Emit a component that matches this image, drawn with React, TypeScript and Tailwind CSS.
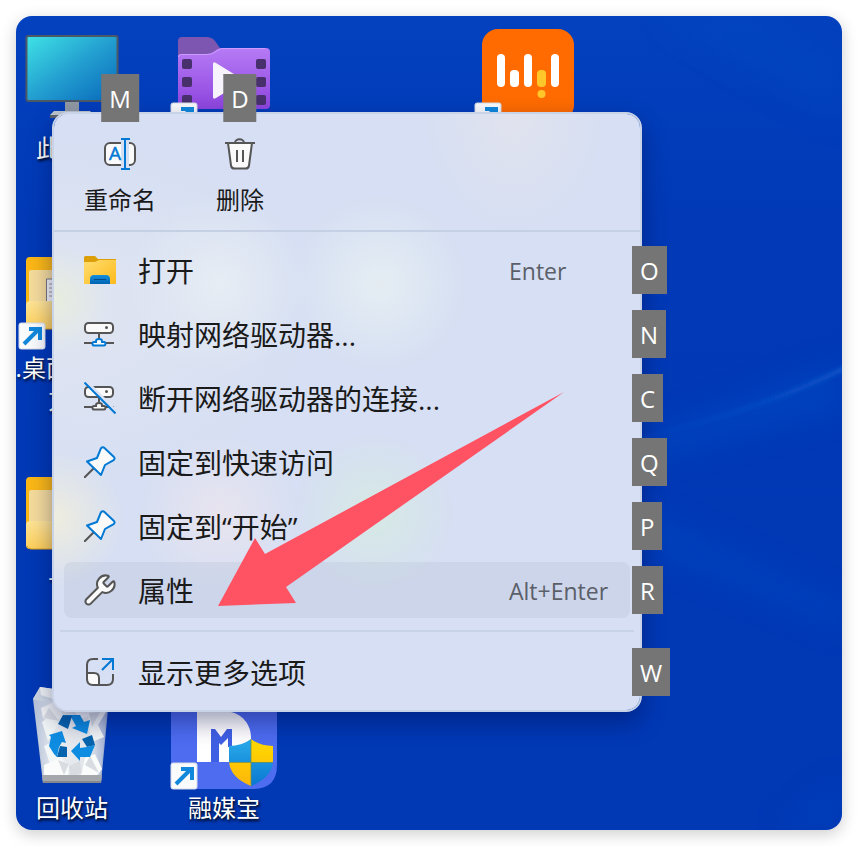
import type { ReactNode } from "react";
import { Wrench } from "lucide-react";

const INK = "#555555";
const BLUE = "#0078d4";

function Svg({ children }: { children: ReactNode }) {
  return (
    <svg viewBox="0 0 32 32" fill="none" className="size-8 shrink-0" aria-hidden="true">
      {children}
    </svg>
  );
}

function RenameIcon() {
  return (
    <Svg>
      <path d="M17 5H6a5 5 0 0 0-5 5v12a5 5 0 0 0 5 5h11z" fill="#fafafa" />
      <path d="M25 5h1a5 5 0 0 1 5 5v12a5 5 0 0 1-5 5h-1z" fill="#fafafa" />
      <path
        d="M17 5H6a5 5 0 0 0-5 5v12a5 5 0 0 0 5 5h11M25 5h1a5 5 0 0 1 5 5v12a5 5 0 0 1-5 5h-1"
        stroke={INK}
        strokeWidth="2"
      />
      <text x="5" y="22" fontSize="19" fill={BLUE} stroke={BLUE} strokeWidth=".5" className="font-['Open_Sans',sans-serif]">
        A
      </text>
      <path d="M21 1v30M17 1h9M17 31h9" stroke={BLUE} strokeWidth="2" />
    </Svg>
  );
}

function TrashIcon() {
  return (
    <Svg>
      <path d="m4 5 3 22.500q.4 3 3.500 3h11q3.100 0 3.500-3L28 5z" fill="#fafafa" stroke={INK} strokeWidth="2" />
      <path d="M1 5h30M11 5c0-5 9-5 9 0M13 12v12M19 12v12" stroke={INK} strokeWidth="2" />
    </Svg>
  );
}

function FolderIcon() {
  return (
    <Svg>
      <defs>
        <linearGradient id="open-folder" x1="0" y1="0" x2="1" y2="1">
          <stop stopColor="#ffdd6f" />
          <stop offset="1" stopColor="#fdba1c" />
        </linearGradient>
        <linearGradient id="open-tray" x1="0" y1="0" x2="0" y2="1">
          <stop stopColor="#1490df" />
          <stop offset="1" stopColor="#0063b1" />
        </linearGradient>
      </defs>
      <path d="M0 3.500Q0 2 1.500 2H11l3 3h18v5H0z" fill="#dd9f08" />
      <path d="M0 8h11l4-2h17v24H0z" fill="url(#open-folder)" />
      <path d="M6 30v-5q0-4 4-4h12q4 0 4 4v5z" fill="url(#open-tray)" />
      <path d="M10 25.500h12" stroke="#004b8d" />
    </Svg>
  );
}

function DriveShape({ accent }: { accent: string }) {
  return (
    <>
      <rect x="1" y="5" width="28" height="10" rx="3.500" fill="#fafafa" stroke={INK} strokeWidth="2" />
      <circle cx="22.500" cy="9.500" r="1.500" fill={INK} />
      <path d="M15 15v6M0 25h8M22 25h8" stroke={INK} strokeWidth="2" />
      <path
        d="M12 24v-1q0-2 3-2t3 2v1h2q1.500 0 1.500 1.700T20 27.500H10q-1.500 0-1.500-1.800T10 24z"
        fill="#fafafa"
        stroke={accent}
        strokeWidth="2"
      />
    </>
  );
}

function MapDriveIcon() {
  return (
    <Svg>
      <DriveShape accent={BLUE} />
    </Svg>
  );
}

function DisconnectIcon() {
  return (
    <Svg>
      <DriveShape accent={INK} />
      <path d="m3 0 29 29" stroke="#dbe2f3" strokeWidth="3" />
      <path d="m.500.500 31 31" stroke={BLUE} strokeWidth="2" />
    </Svg>
  );
}

function PinIcon() {
  return (
    <Svg>
      <path d="m0 32 10-10" stroke={INK} strokeWidth="2" />
      <path
        d="M17 2.200q1.800-1.800 3.700 0l9 8.500q2 2-.5 3.700L21 19l-4 10L3 15.500 13 12z"
        fill="#fafafa"
        stroke={BLUE}
        strokeWidth="2"
        strokeLinejoin="round"
      />
    </Svg>
  );
}

function WrenchIcon() {
  return (
    <Wrench viewBox="1 1 22 22" className="size-8 shrink-0" color={INK} strokeWidth={1.400} fill="#fafafa" aria-hidden="true" />
  );
}

function MoreIcon() {
  return (
    <Svg>
      <path d="M3 17h7q5 0 5 5v7H8q-5 0-5-5z" fill="#fafafa" />
      <path
        d="M14 3H9Q3 3 3 9v14q0 6 6 6h14q6 0 6-6v-5M3 17h7q5 0 5 5v7"
        stroke={INK}
        strokeWidth="2"
      />
      <path d="M18 3h11v11M29 3 18 14" stroke={BLUE} strokeWidth="2" />
    </Svg>
  );
}

/* ---------- desktop icons, drawn in a 96px box ---------- */

function ShortcutBadge() {
  return (
    <g>
      <rect x="-5" y="75" width="26" height="26" rx="2" fill="#fafbfc" stroke="#d5dce5" />
      <path d="M0 96 15 81M5 81h11v11" stroke="#1188dc" strokeWidth="4" fill="none" />
    </g>
  );
}

function Art({ children }: { children: ReactNode }) {
  return (
    <svg viewBox="0 0 96 96" className="size-24 shrink-0 overflow-visible" aria-hidden="true">
      {children}
    </svg>
  );
}

function ComputerArt() {
  return (
    <Art>
      <defs>
        <linearGradient id="screen" x1="0" y1="0" x2="1" y2="1">
          <stop stopColor="#3fe3e6" />
          <stop offset=".5" stopColor="#239fd0" />
          <stop offset="1" stopColor="#0868bb" />
        </linearGradient>
      </defs>
      <path d="M41 73h14v12H41z" fill="#8f98a3" />
      <path d="m30 83h36l4 4v2H26v-2z" fill="#c0c7ce" />
      <path d="M26 87h44v3H26z" fill="#5c646d" />
      <rect x="2.500" y="8" width="91" height="65" rx="2" fill="url(#screen)" stroke="#4b5967" strokeWidth="2" />
    </Art>
  );
}

function VideoFolderArt() {
  return (
    <Art>
      <defs>
        <linearGradient id="video" x1="0" y1="0" x2="0" y2="1">
          <stop stopColor="#b67bf5" />
          <stop offset="1" stopColor="#8d44dd" />
        </linearGradient>
      </defs>
      <path d="M2 13q0-4 4-4h24q6 0 9 4l5 7H90v20H2z" fill="#7c56b0" />
      <path d="M2 29q0-3 3-3h25q5 0 8-2.500l3-2q2-1.500 5-1.500h44q4 0 4 4v53q0 4-4 4H6q-4 0-4-4z" fill="url(#video)" />
      <path d="M2.500 29q0-2.500 3-2.500H31q5 0 8-2.500l3-2q2-1.500 5-1.500h42" stroke="#cb9bff" fill="none" />
      {[31, 49, 67].map((y) => (
        <g key={y} fill="#47306c">
          <rect x="6" y={y} width="10" height="10" rx="2" />
          <rect x="80" y={y} width="10" height="10" rx="2" />
        </g>
      ))}
      <path d="M37 36q0-3 3-1l26 16q2 1.500 0 3L40 70q-3 2-3-1z" fill="#f7f3fd" />
      <ShortcutBadge />
    </Art>
  );
}

function BarsArt() {
  return (
    <Art>
      <rect x="2" y="1" width="92" height="92" rx="16" fill="#ff6b00" />
      <g fill="#ffffff">
        <rect x="17" y="26" width="8" height="33" rx="4" />
        <rect x="30" y="42" width="9" height="17" rx="4" />
        <rect x="44" y="26" width="8" height="33" rx="4" />
        <rect x="71" y="26" width="8" height="33" rx="4" />
      </g>
      <rect x="57" y="42" width="9" height="17" rx="4" fill="#ffc72a" />
      <circle cx="61.500" cy="66" r="4" fill="#ffc72a" />
      <ShortcutBadge />
    </Art>
  );
}

function YellowFolderArt({ shortcut = false }: { shortcut?: boolean }) {
  return (
    <Art>
      <defs>
        <linearGradient id="flap" x1="0" y1="0" x2="0" y2="1">
          <stop stopColor="#ffe596" />
          <stop offset="1" stopColor="#ffd05a" />
        </linearGradient>
      </defs>
      <path d="M2 13q0-4 4-4h30l10 8h44q4 0 4 4v50H2z" fill="#fcb814" />
      <path d="M5 24q0-2 2-2h80v34H5z" fill="#f6dc9b" />
      {shortcut && (
        <>
          <path d="M22.500 31h20v28h-20z" fill="#f5f5f5" stroke="#777777" />
          <path d="M25 36h5M25 40h5M25 44h5M25 48h5" stroke="#9a9a9a" />
        </>
      )}
      <path d="M2 57q0-4 4-4h84q4 0 4 4v20q0 4-4 4H6q-4 0-4-4z" fill="url(#flap)" />
      <path d="M3 78q1 3 4 3h82q3 0 4-3" stroke="#dfa01c" fill="none" />
      {shortcut && <ShortcutBadge />}
    </Art>
  );
}

function RecycleArt() {
  return (
    <Art>
      <defs>
        <linearGradient id="bin" x1="0" y1="0" x2="1" y2="0">
          <stop stopColor="#a9b8d3" />
          <stop offset=".3" stopColor="#e6eaee" />
          <stop offset=".75" stopColor="#dde2e8" />
          <stop offset="1" stopColor="#8499c9" />
        </linearGradient>
      </defs>
      <path d="M9 11 16-1l14 2 22 2 24 3 9 5-8 84H19z" fill="url(#bin)" />
      <path d="m9 11 7-12 11 5 5 8-8 2z" fill="#cdd7e2" />
      <path d="m16-1 14 2-1 10-12-4zM17 20l18-8 4 17-14 5-6-4z" fill="#f1f4f4" />
      <path d="m18 34 12-9 4 12-10 16zM66 18l16 6-8 13 6 12-12 5-4-20zM20 58l12-6 8 22-13 5z" fill="#f2f5f5" />
      <path d="m20 77 14-6 11 5-1 14-24-3zM57 87l4-17 10-4 7 15-6 8zM48 18l15-4 4 14-12 3z" fill="#fafbfb" />
      <path d="m34 72 11 4-5 11zM66 68l9 17-14-8zM76 24l-8 15-3-14zM25 20l10 13-16-3zM45 78l11-5 2 12-12 4z" fill="#d3d8dd" />
      <path d="m9 11 75 2-8 80H20z" fill="#ffffff" opacity=".14" />
      <path d="M18 87h60l-1 8H19z" fill="#a4a8ac" />
      <path d="M19 93h58v2H19z" fill="#85898e" />
      <path d="m39 27 17 0 4 7 6-2-3 14-15-6 4-2-5-9z" fill="#0e8ce2" />
      <path d="m39 27 9 1-4 13-10-5z" fill="#0563ae" />
      <path d="m25 47 13-4 4 12-4-1-3 5-2 10-3-3-5-8 2-9z" fill="#0e8ce2" />
      <path d="m36 58 7 1v10H33z" fill="#0563ae" />
      <path d="m63 59 8-2-5 12H56v4L47 63l9-9v6z" fill="#0e8ce2" />
      <path d="m58 51 10-4 3 10-8 2z" fill="#0563ae" />
    </Art>
  );
}

function MediaArt() {
  return (
    <Art>
      <defs>
        <clipPath id="shield">
          <path d="M75 51q9 7 22 7v14q0 17-22 26-22-9-22-26V58q13 0 22-7z" />
        </clipPath>
        <linearGradient id="shield-blue" x1="0" y1="0" x2="0" y2="1">
          <stop stopColor="#2badec" />
          <stop offset="1" stopColor="#0876d0" />
        </linearGradient>
        <linearGradient id="shield-gold" x1="0" y1="0" x2="0" y2="1">
          <stop stopColor="#ffdc00" />
          <stop offset="1" stopColor="#fdb40a" />
        </linearGradient>
      </defs>
      <path d="M-5-5h106v82q0 24-24 24H-5z" fill="#4d6cf0" />
      <path d="M21 23h29c17 2 25 14 25 27v24H21z" fill="#ffffff" />
      <path d="M35 41h4l6 8 6-8h5v18h-4v-9l-7 7-2-2v19h-8z" fill="#4060e4" />
      <g clipPath="url(#shield)">
        <path d="M50 50h25v24H50zM75 74h25v25H75z" fill="url(#shield-blue)" />
        <path d="M75 50h25v24H75zM50 74h25v25H50z" fill="url(#shield-gold)" />
        <path d="M75 50v50M50 74.500h50" stroke="#6d8f55" strokeWidth=".8" />
      </g>
      <ShortcutBadge />
    </Art>
  );
}

type DesktopItem = { id: string; cell: string; art: ReactNode; label?: string };

const desktopItems: DesktopItem[] = [
  { id: "computer", cell: "col-start-1 row-start-1", art: <ComputerArt />, label: "此电脑" },
  { id: "videos", cell: "col-start-2 row-start-1", art: <VideoFolderArt /> },
  { id: "bars", cell: "col-start-4 row-start-1", art: <BarsArt /> },
  { id: "files", cell: "col-start-1 row-start-2", art: <YellowFolderArt shortcut />, label: ".桌面_文件 方式" },
  { id: "folder", cell: "col-start-1 row-start-3", art: <YellowFolderArt />, label: "下载" },
  { id: "recycle", cell: "col-start-1 row-start-4", art: <RecycleArt />, label: "回收站" },
  { id: "media", cell: "col-start-2 row-start-4", art: <MediaArt />, label: "融媒宝" },
];

function Wallpaper() {
  return (
    <svg
      viewBox="0 0 826 814"
      preserveAspectRatio="none"
      className="absolute inset-0 size-full"
      aria-hidden="true"
    >
      <defs>
        <linearGradient id="wall" x1="0" y1="0" x2="0" y2="1">
          <stop stopColor="#0341be" />
          <stop offset=".25" stopColor="#0139b6" />
          <stop offset="1" stopColor="#0138b4" />
        </linearGradient>
        <linearGradient id="ray" x1="0" y1="0" x2="1" y2="0">
          <stop stopColor="#0a53c8" stopOpacity="0" />
          <stop offset="1" stopColor="#0f57cb" />
        </linearGradient>
        <filter id="soft" x="-20%" y="-50%" width="140%" height="200%">
          <feGaussianBlur stdDeviation="14" />
        </filter>
        <filter id="fine" x="-20%" y="-50%" width="140%" height="200%">
          <feGaussianBlur stdDeviation="2" />
        </filter>
      </defs>
      <rect width="826" height="814" fill="url(#wall)" />
      <path d="M610 425 826 345v50L610 450z" fill="#0446c1" opacity=".6" filter="url(#soft)" />
      <path d="M620 420Q740 395 830 349v5Q740 398 620 424z" fill="url(#ray)" filter="url(#fine)" />
      <path d="M620 490 830 590v25L620 530z" fill="#0446c1" opacity=".5" filter="url(#soft)" />
      <path d="M640 0 826 110V40L740 0z" fill="#0548c2" opacity=".4" filter="url(#soft)" />
      <path d="M826 760v54h-70z" fill="#0647c2" opacity=".4" filter="url(#soft)" />
    </svg>
  );
}

function KeyTip({ letter, side }: { letter: string; side: "top" | "right" }) {
  return (
    <kbd
      className={`absolute z-10 flex h-12 items-center bg-[#757575] px-2 pt-0.5 font-['Open_Sans','Noto_Sans',sans-serif] text-2xl text-white ${
        side === "top" ? "bottom-full left-1/2 -translate-x-1/2" : "top-1 left-full ml-0.5"
      }`}
    >
      {letter}
    </kbd>
  );
}

type MenuEntry = { label: string; tip: string; icon: ReactNode; shortcut?: string; active?: boolean };

const actions: MenuEntry[] = [
  { label: "重命名", tip: "M", icon: <RenameIcon /> },
  { label: "删除", tip: "D", icon: <TrashIcon /> },
];

const entries: MenuEntry[] = [
  { label: "打开", tip: "O", icon: <FolderIcon />, shortcut: "Enter" },
  { label: "映射网络驱动器...", tip: "N", icon: <MapDriveIcon /> },
  { label: "断开网络驱动器的连接...", tip: "C", icon: <DisconnectIcon /> },
  { label: "固定到快速访问", tip: "Q", icon: <PinIcon /> },
  { label: "固定到“开始”", tip: "P", icon: <PinIcon /> },
  { label: "属性", tip: "R", icon: <WrenchIcon />, shortcut: "Alt+Enter", active: true },
];

function MenuItem({ label, tip, icon, shortcut, active }: MenuEntry) {
  return (
    <button
      type="button"
      role="menuitem"
      className={`relative flex h-14 w-full items-center rounded-lg px-5 text-left ${active ? "bg-[#8490b0]/12" : ""}`}
    >
      {icon}
      <span className="ml-[22px] flex-1 pt-0.5 text-[28px] leading-10 text-[#1a1a1a]">{label}</span>
      {shortcut && <span className="w-[101px] pt-0.5 text-[23px] whitespace-nowrap text-[#5b5f69]">{shortcut}</span>}
      <KeyTip letter={tip} side="right" />
    </button>
  );
}

function ContextMenu() {
  return (
    <div
      role="menu"
      className="absolute top-24 left-9 w-[590px] rounded-2xl border-2 border-[#c9d3e8] bg-[#d6dff3] bg-[radial-gradient(circle_at_0px_185px,#e8eddf_0px,transparent_55px),radial-gradient(circle_at_0px_405px,#efeddf_0px,transparent_70px),radial-gradient(circle_at_165px_170px,#e6edf4_0px,transparent_90px),radial-gradient(circle_at_325px_170px,#e5edf3_0px,transparent_90px),radial-gradient(circle_at_165px_400px,#e8e4ef_0px,transparent_80px),radial-gradient(circle_at_320px_400px,#d6e9e4_0px,transparent_80px),radial-gradient(ellipse_at_460px_0px,#e1e3ee_0px,transparent_90px),radial-gradient(ellipse_at_0px_200px,#e0e5f1_0px,transparent_260px)] bg-clip-padding shadow-[0_10px_24px_rgba(0,10,70,0.4)]"
    >
      <div className="flex gap-2 border-b-2 border-[#c6d0e5] px-2.5 pt-2 pb-3.5">
        {actions.map((action) => (
          <button key={action.tip} type="button" role="menuitem" className="relative flex w-28 flex-col items-center gap-3.5 pt-4">
            <KeyTip letter={action.tip} side="top" />
            {action.icon}
            <span className="text-2xl leading-8 text-[#1a1a1a]">{action.label}</span>
          </button>
        ))}
      </div>

      <div className="flex flex-col gap-2 px-2.5 pt-2.5">
        {entries.map((entry) => (
          <MenuItem key={entry.tip} {...entry} />
        ))}
      </div>

      <hr className="mx-1.5 my-3 border-t-2 border-[#c9d3e8]" />

      <div className="px-2.5 pb-2.5">
        <MenuItem label="显示更多选项" tip="W" icon={<MoreIcon />} />
      </div>

      {/* red pointer towards the properties row */}
      <svg
        viewBox="0 0 346 214"
        className="pointer-events-none absolute top-[278px] left-[164px] h-[214px] w-[346px]"
        aria-hidden="true"
      >
        <path d="M0 214 37 146l10 16L346 0 68 195l10 16z" fill="#ff5263" />
      </svg>
    </div>
  );
}

export default function App() {
  return (
    <main className="flex min-h-screen bg-white p-4 font-['Open_Sans','Noto_Sans_CJK_SC',sans-serif]">
      <section className="relative flex-1 overflow-hidden rounded-2xl shadow-[0_4px_16px_rgba(0,0,0,0.2)]">
        <Wallpaper />
        <div className="relative -mb-24 -ml-5 grid grid-cols-[repeat(4,152px)] grid-rows-[repeat(4,220px)] pt-3">
          {desktopItems.map((item) => (
            <div key={item.id} className={`flex flex-col items-center gap-2 ${item.cell}`}>
              {item.art}
              {item.label && (
                <span className="w-30 text-center text-2xl leading-8 break-keep text-white [text-shadow:1px_2px_3px_#000000]">
                  {item.label}
                </span>
              )}
            </div>
          ))}
        </div>
        <ContextMenu />
      </section>
    </main>
  );
}
